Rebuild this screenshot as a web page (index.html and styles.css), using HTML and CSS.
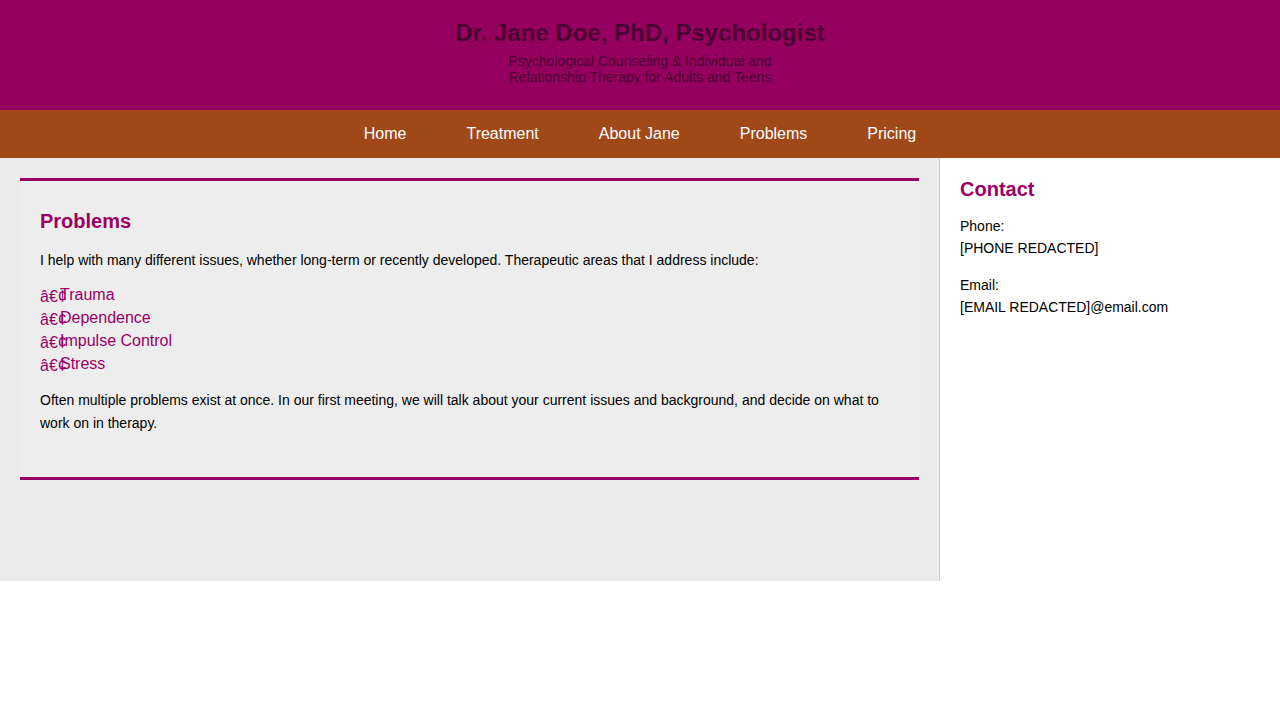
FILE: index.html
```html
<!DOCTYPE html>
<html lang="en">
<head>
<meta charset="utf-8">
<title>Dr. Jane Doe, PhD, Psychologist</title>
<link rel="stylesheet" href="styles.css">
</head>
<body>
<header class="site-header">
  <h1 class="site-title">Dr. Jane Doe, PhD, Psychologist</h1>
  <p class="site-tagline">Psychological Counseling &amp; Individual and Relationship Therapy for Adults and Teens</p>
</header>
<nav class="site-nav">
  <a href="#" class="nav-link">Home</a>
  <a href="#" class="nav-link">Treatment</a>
  <a href="#" class="nav-link">About Jane</a>
  <a href="#" class="nav-link">Problems</a>
  <a href="#" class="nav-link">Pricing</a>
</nav>
<div class="layout">
  <main class="main-col">
    <section class="panel">
      <h2 class="panel-title">Problems</h2>
      <p class="text intro">I help with many different issues, whether long-term or recently developed. Therapeutic areas that I address include:</p>
      <ul class="problem-list">
        <li class="problem-item">Trauma</li>
        <li class="problem-item">Dependence</li>
        <li class="problem-item">Impulse Control</li>
        <li class="problem-item">Stress</li>
      </ul>
      <p class="text">Often multiple problems exist at once. In our first meeting, we will talk about your current issues and background, and decide on what to work on in therapy.</p>
    </section>
  </main>
  <aside class="side-col">
    <h2 class="side-title">Contact</h2>
    <p class="text">Phone:<br>[PHONE REDACTED]</p>
    <p class="text">Email:<br>[EMAIL REDACTED]@email.com</p>
  </aside>
</div>
</body>
</html>
```

FILE: styles.css
```css
html, body {
  margin: 0;
  padding: 0;
  background: #ffffff;
  font-family: "Liberation Sans", Arial, sans-serif;
  color: #000;
}

.site-header {
  box-sizing: border-box;
  height: 110px;
  background: #95005f;
  padding-top: 18px;
  text-align: center;
  color: #4b0031;
}

.site-title {
  margin: 0;
  font-size: 24px;
  line-height: 30px;
  font-weight: bold;
}

.site-tagline {
  margin: 5px auto 0;
  width: 280px;
  font-size: 14px;
  line-height: 16px;
}

.site-nav {
  height: 48px;
  background: #a04818;
  display: flex;
  justify-content: center;
  align-items: center;
  gap: 60px;
}

.nav-link {
  color: #ffffff;
  text-decoration: none;
  font-size: 16px;
}

.layout {
  display: flex;
  min-height: 423px;
}

.main-col {
  box-sizing: border-box;
  width: 940px;
  background: #ebebeb;
  border-right: 1px solid #cccccc;
  padding: 20px;
}

.panel {
  background: #ededed;
  border-top: 3px solid #990066;
  border-bottom: 3px solid #990066;
  padding: 20px 20px 43px;
}

.panel-title,
.side-title {
  font-size: 20px;
  font-weight: bold;
  color: #990066;
}

.panel-title {
  margin: 4px 0 12px;
  line-height: 32px;
}

.side-title {
  margin: 0 0 15px;
  line-height: 22px;
}

.text {
  margin: 0 0 14px;
  font-size: 14px;
  line-height: 22.4px;
}

.text.intro {
  margin-bottom: 12px;
}

.text:last-child {
  margin-bottom: 0;
}

.problem-list {
  list-style: none;
  margin: 0 0 14px;
  padding: 0;
}

.problem-item {
  position: relative;
  padding-left: 20px;
  font-size: 16px;
  line-height: 23px;
  color: #990066;
}

.problem-item::before {
  content: "\00E2\20AC\00A2";
  position: absolute;
  left: 0;
  top: 2px;
}

.side-col {
  box-sizing: border-box;
  flex: 1;
  padding: 20px;
}
```
